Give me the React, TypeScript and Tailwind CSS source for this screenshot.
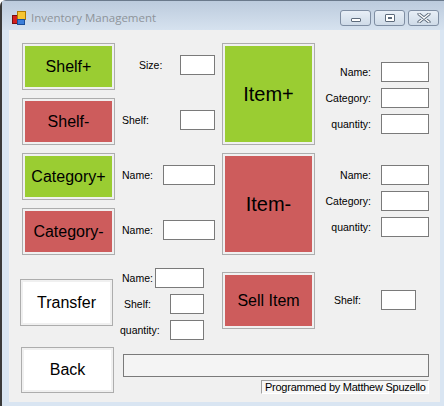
import React from "react"

const WinButton = ({ text, color, size, className }: { text: string; color: string; size: string; className: string }) => (
  <div className={`border border-[#adadad] bg-[#f0f0f0] p-[2px] ${className}`}>
    <div className={`flex h-full w-full items-center justify-center ${color} ${size} text-black`}>{text}</div>
  </div>
)

const Box = ({ className }: { className: string }) => (
  <div className={`h-[20px] border border-[#7a7a7a] bg-white ${className}`} />
)

const Label = ({ text }: { text: string }) => <span className="text-[10.5px] leading-none text-black">{text}</span>

const RightField = ({ text }: { text: string }) => (
  <div className="flex h-[20px] items-center">
    <div className="flex w-[56px] justify-end">
      <Label text={text} />
    </div>
    <Box className="ml-[10px] w-[48px]" />
  </div>
)

const CaptionBtn = ({ children }: { children: React.ReactNode }) => (
  <div className="flex h-[16px] w-[31px] items-center justify-center rounded-[3px] border border-[#7f8ea3] bg-gradient-to-b from-[#e8eff7] to-[#cfdbe8]">
    {children}
  </div>
)

export default function App() {
  return (
    <div className="flex h-[406px] w-[444px] flex-col rounded-tl-[6px] border-l-2 border-t border-l-[#3a3a3a] border-t-[#6b7a8c] bg-[#d9e5f2] font-['Liberation_Sans',Arial,sans-serif]">
      {/* title bar */}
      <div className="flex h-[29px] items-start bg-gradient-to-b from-[#bccbdd] to-[#d6e2ef]">
        <svg className="ml-[10px] mt-[10px]" width="14" height="14" viewBox="0 0 14 14">
          <rect x="0.5" y="4.5" width="5" height="8" fill="#d42020" stroke="#7a1010" />
          <rect x="5.5" y="0.5" width="8" height="8" fill="#f7c531" stroke="#b07a00" />
          <rect x="5.5" y="8.5" width="7" height="5" fill="#3d7fd9" stroke="#1b4f9a" />
        </svg>
        <span className="ml-[5px] mt-[9px] font-['Open_Sans',sans-serif] text-[11.5px] leading-[16px] text-[#8e949a]">
          Inventory Management
        </span>
        <div className="ml-auto mr-[5px] mt-[9px] flex gap-[3px]">
          <CaptionBtn>
            <div className="mt-[3px] h-[4px] w-[10px] rounded-[1px] border border-[#5d6b7c] bg-white" />
          </CaptionBtn>
          <CaptionBtn>
            <div className="flex h-[8px] w-[10px] items-center justify-center rounded-[1px] border border-[#5d6b7c] bg-white">
              <div className="h-[2px] w-[4px] border border-[#5d6b7c]" />
            </div>
          </CaptionBtn>
          <CaptionBtn>
            <svg width="14" height="10" viewBox="0 0 14 10">
              <path d="M2 1 L12 9 M12 1 L2 9" stroke="#5d6b7c" strokeWidth="3.2" strokeLinecap="round" />
              <path d="M2 1 L12 9 M12 1 L2 9" stroke="#ffffff" strokeWidth="1.4" strokeLinecap="round" />
            </svg>
          </CaptionBtn>
        </div>
      </div>

      {/* client area */}
      <div className="ml-[7px] h-[372px] w-[431px] bg-[#f0f0f0] text-black">
        {/* top section */}
        <div className="flex h-[225px] items-start pt-[13px]">
          <div className="ml-[13px] flex w-[93px] flex-col gap-[8px]">
            <WinButton text="Shelf+" color="bg-[#9acd32]" size="text-[16px]" className="h-[47px] w-[93px]" />
            <WinButton text="Shelf-" color="bg-[#cd5c5c]" size="text-[16px]" className="h-[47px] w-[93px]" />
            <WinButton text="Category+" color="bg-[#9acd32]" size="text-[16px]" className="h-[47px] w-[93px]" />
            <WinButton text="Category-" color="bg-[#cd5c5c]" size="text-[16px]" className="h-[47px] w-[93px]" />
          </div>

          <div className="flex w-[100px] flex-col gap-[8px]">
            <div className="h-[47px] pt-[12px]">
              <div className="flex h-[20px] items-center pl-[24px]">
                <Label text="Size:" />
                <Box className="ml-auto w-[35px]" />
              </div>
            </div>
            <div className="h-[47px] pt-[12px]">
              <div className="flex h-[20px] items-center pl-[7px]">
                <Label text="Shelf:" />
                <Box className="ml-auto w-[35px]" />
              </div>
            </div>
            <div className="h-[47px] pt-[12px]">
              <div className="flex h-[20px] items-center pl-[7px]">
                <Label text="Name:" />
                <Box className="ml-auto w-[52px]" />
              </div>
            </div>
            <div className="h-[47px] pt-[12px]">
              <div className="flex h-[20px] items-center pl-[7px]">
                <Label text="Name:" />
                <Box className="ml-auto w-[52px]" />
              </div>
            </div>
          </div>

          <div className="ml-[7px] flex w-[93px] flex-col gap-[8px]">
            <WinButton text="Item+" color="bg-[#9acd32]" size="text-[20px]" className="h-[102px] w-[93px]" />
            <WinButton text="Item-" color="bg-[#cd5c5c]" size="text-[20px]" className="h-[102px] w-[93px]" />
          </div>

          <div className="flex w-[114px] flex-col">
            <div className="flex h-[102px] flex-col gap-[6px] pt-[19px]">
              <RightField text="Name:" />
              <RightField text="Category:" />
              <RightField text="quantity:" />
            </div>
            <div className="mt-[8px] flex h-[102px] flex-col gap-[6px] pt-[12px]">
              <RightField text="Name:" />
              <RightField text="Category:" />
              <RightField text="quantity:" />
            </div>
          </div>
        </div>

        {/* transfer / sell section */}
        <div className="flex h-[92px] items-start">
          <WinButton text="Transfer" color="bg-white" size="text-[16px]" className="ml-[11px] mt-[24px] h-[47px] w-[93px]" />

          <div className="mt-[13px] flex w-[91px] flex-col gap-[6px]">
            <div className="flex h-[20px] items-center pl-[9px]">
              <Label text="Name:" />
              <Box className="ml-auto w-[49px]" />
            </div>
            <div className="flex h-[20px] items-center pl-[11px]">
              <Label text="Shelf:" />
              <Box className="ml-auto w-[34px]" />
            </div>
            <div className="flex h-[20px] items-center pl-[7px]">
              <Label text="quantity:" />
              <Box className="ml-auto w-[34px]" />
            </div>
          </div>

          <WinButton text="Sell Item" color="bg-[#cd5c5c]" size="text-[16px]" className="ml-[18px] mt-[17px] h-[57px] w-[93px]" />

          <div className="ml-[19px] mt-[35px] flex h-[20px] w-[82px] items-center">
            <Label text="Shelf:" />
            <Box className="ml-auto w-[35px]" />
          </div>
        </div>

        {/* back / status */}
        <div className="flex items-start">
          <WinButton text="Back" color="bg-white" size="text-[16px]" className="ml-[12px] h-[46px] w-[93px]" />
          <div className="ml-[9px] flex w-[306px] flex-col">
            <div className="mt-[7px] h-[23px] border border-[#7a7a7a] bg-[#f4f4f4]" />
            <div className="mt-[3px] flex h-[14px] w-[168px] items-center self-end overflow-hidden whitespace-nowrap border border-b-white border-l-[#a0a0a0] border-r-white border-t-[#a0a0a0] bg-[#f7f7f7] pl-[3px] text-[11px] leading-none tracking-[-0.25px]">
              Programmed by Matthew Spuzello
            </div>
          </div>
        </div>
      </div>
    </div>
  )
}
